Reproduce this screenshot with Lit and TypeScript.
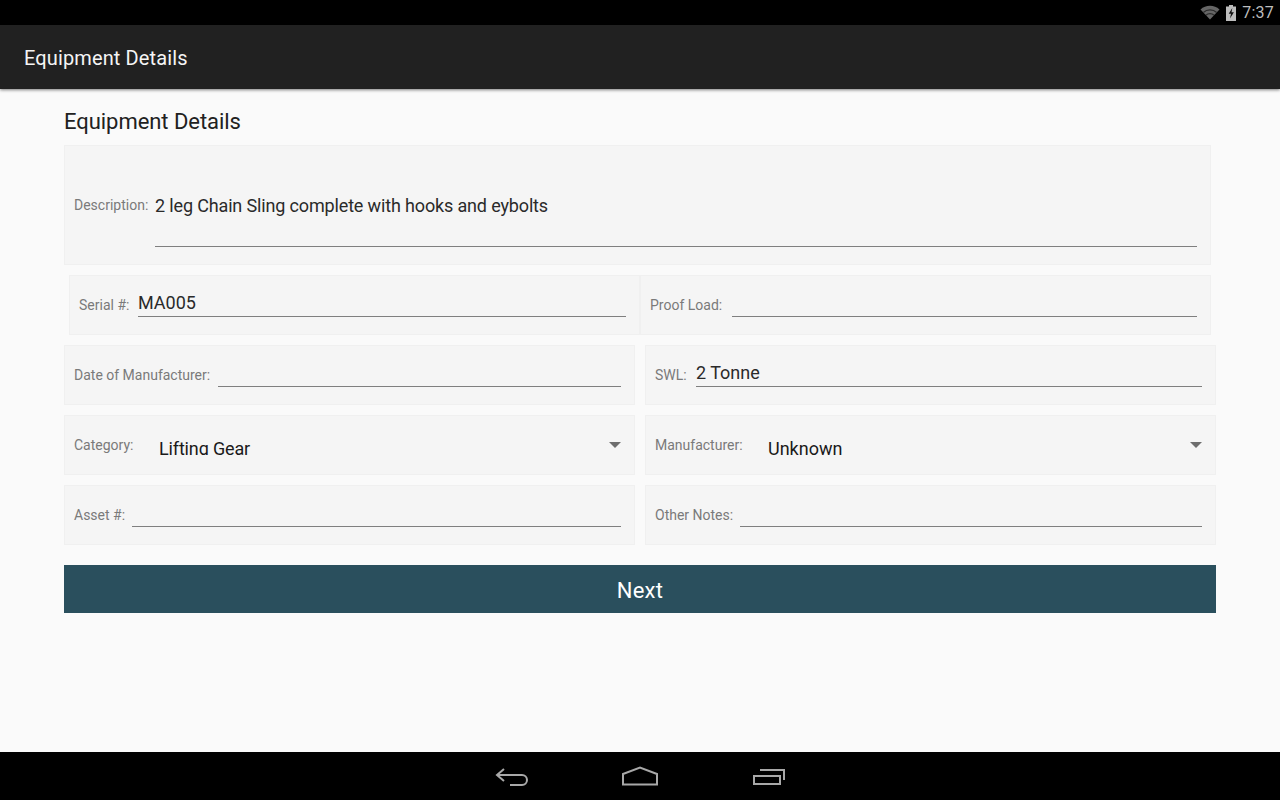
import { LitElement, html, css, svg } from "lit";
import { customElement } from "lit/decorators.js";

@customElement("app-root")
export class AppRoot extends LitElement {
  static styles = css`
    :host { display: flex; flex-direction: column; width: 1280px; height: 800px; background: #fafafa; font-family: Roboto, sans-serif; overflow: hidden; }
    .status { height: 25px; flex: none; background: #000; display: flex; align-items: center; justify-content: flex-end; color: #bdbdbd; font-size: 16px; letter-spacing: .2px; padding-right: 6px; box-sizing: border-box; }
    .status svg { display: block; }
    .wifi { margin-right: 6px; }
    .batt { margin-right: 6px; }
    .bar { height: 64px; flex: none; box-sizing: border-box; background: #212121; color: #f5f5f5; display: flex; align-items: center; padding: 1px 0 0 24px; box-shadow: 0 1px 3px rgba(0,0,0,.5); position: relative; z-index: 1; }
    .bar span { font-size: 20px; font-weight: 400; letter-spacing: .12px; }
    main { flex: 1; padding: 0 64px; display: flex; flex-direction: column; }
    h1 { margin: 0; font-size: 22px; font-weight: 400; letter-spacing: -.05px; color: #212121; height: 56px; line-height: 66px; }
    .row { display: flex; margin-bottom: 10px; }
    .row.gap { gap: 10px; }
    .row.first { margin-right: 5px; }
    .row.shift { margin: 0 5px 10px 5px; }
    .card { flex: 1 1 0; min-width: 0; height: 60px; box-sizing: border-box; background: #f5f5f5; border: 1px solid #f0f0f0; display: flex; padding: 0 13px 0 9px; position: relative; }
    .card.tall { height: 120px; }
    .label { flex: none; font-size: 14px; color: #7a7a7a; line-height: 18px; padding-top: 20px; white-space: nowrap; }
    .tall .label { padding-top: 50px; }
    .l-desc { width: 81px; }
    .l-serial { width: 59px; }
    .l-proof { width: 82px; }
    .l-date { width: 144px; }
    .l-swl { width: 41px; }
    .l-asset { width: 58px; }
    .l-notes { width: 85px; }
    .l-cat { width: 85px; }
    .l-man { width: 113px; }
    .field { flex: 1; min-width: 0; height: 41px; box-sizing: border-box; border-bottom: 1px solid #7f7f7f; font-size: 18px; color: #2a2a2a; line-height: 22px; padding-top: 16px; }
    .tall .field { height: 101px; padding-top: 49px; letter-spacing: -.15px; }
    .value { font-size: 18px; color: #1a1a1a; height: 20px; line-height: 28px; overflow: hidden; margin-top: 19px; flex: 1; }
    .value.tight { letter-spacing: -.15px; }
    .arrow { position: absolute; right: 13px; top: 26px; width: 0; height: 0; border-left: 6px solid transparent; border-right: 6px solid transparent; border-top: 6px solid #6e6e6e; }
    .next { margin-top: 10px; height: 48px; flex: none; background: #2a4f5d; color: #fff; border: 0; font: 400 22px Roboto, sans-serif; display: flex; align-items: center; justify-content: center; letter-spacing: .2px; padding: 2px 0 0; }
    .nav { height: 48px; flex: none; background: #000; display: flex; align-items: center; justify-content: center; gap: 93px; }
    .nav svg { display: block; }
  `;

  private field(label: string, cls: string, value = "") {
    return html`<div class="card"><span class="label ${cls}">${label}</span><div class="field">${value}</div></div>`;
  }

  private select(label: string, cls: string, value: string, tight = false) {
    return html`<div class="card"><span class="label ${cls}">${label}</span><div class="value ${tight ? "tight" : ""}">${value}</div><i class="arrow"></i></div>`;
  }

  render() {
    return html`
      <div class="status">
        <svg class="wifi" width="20" height="15" viewBox="0 0 20 15">
          ${svg`<path d="M0.5 4.500 A14 14 0 0 1 19.500 4.500 L10 14.500Z" fill="#666"/>
          <path d="M3.300 7.500 A10 10 0 0 1 16.700 7.500 M5.900 10.200 A6 6 0 0 1 14.100 10.200" fill="none" stroke="#2c2c2c" stroke-width="1.200"/>`}
        </svg>
        <svg class="batt" width="10" height="16" viewBox="0 0 10 16">
          ${svg`<path d="M3 0h4v1.500h3v14.500h-10v-14.500h3z" fill="#bdbdbd"/><path d="M6.300 3l-3.600 5.800h2.300l-1 4.700 3.900-6.300h-2.400z" fill="#111"/>`}
        </svg>
        <span>7:37</span>
      </div>
      <div class="bar"><span>Equipment Details</span></div>
      <main>
        <h1>Equipment Details</h1>
        <div class="row first">
          <div class="card tall"><span class="label l-desc">Description:</span><div class="field">2 leg Chain Sling complete with hooks and eybolts</div></div>
        </div>
        <div class="row shift">${this.field("Serial #:", "l-serial", "MA005")}${this.field("Proof Load:", "l-proof")}</div>
        <div class="row gap">${this.field("Date of Manufacturer:", "l-date")}${this.field("SWL:", "l-swl", "2 Tonne")}</div>
        <div class="row gap">${this.select("Category:", "l-cat", "Lifting Gear", true)}${this.select("Manufacturer:", "l-man", "Unknown")}</div>
        <div class="row gap">${this.field("Asset #:", "l-asset")}${this.field("Other Notes:", "l-notes")}</div>
        <button class="next">Next</button>
      </main>
      <div class="nav">
        <svg width="34" height="20" viewBox="0 0 34 20" fill="none" stroke="#a8a8a8" stroke-width="2">
          ${svg`<path d="M9 3 L2 9 L9 15 M2 9 H27 A5 5 0 0 1 27 19 H15"/>`}
        </svg>
        <svg width="36" height="20" viewBox="0 0 36 20" fill="none" stroke="#a8a8a8" stroke-width="2">
          ${svg`<path d="M1 18.500 V8 L18 1.500 L35 8 V18.500 Z"/>`}
        </svg>
        <svg width="34" height="20" viewBox="0 0 34 20" fill="none" stroke="#a8a8a8" stroke-width="2">
          ${svg`<path d="M3 10 H29 V18 H3 Z M9 4 H33 V14"/>`}
        </svg>
      </div>
    `;
  }
}
